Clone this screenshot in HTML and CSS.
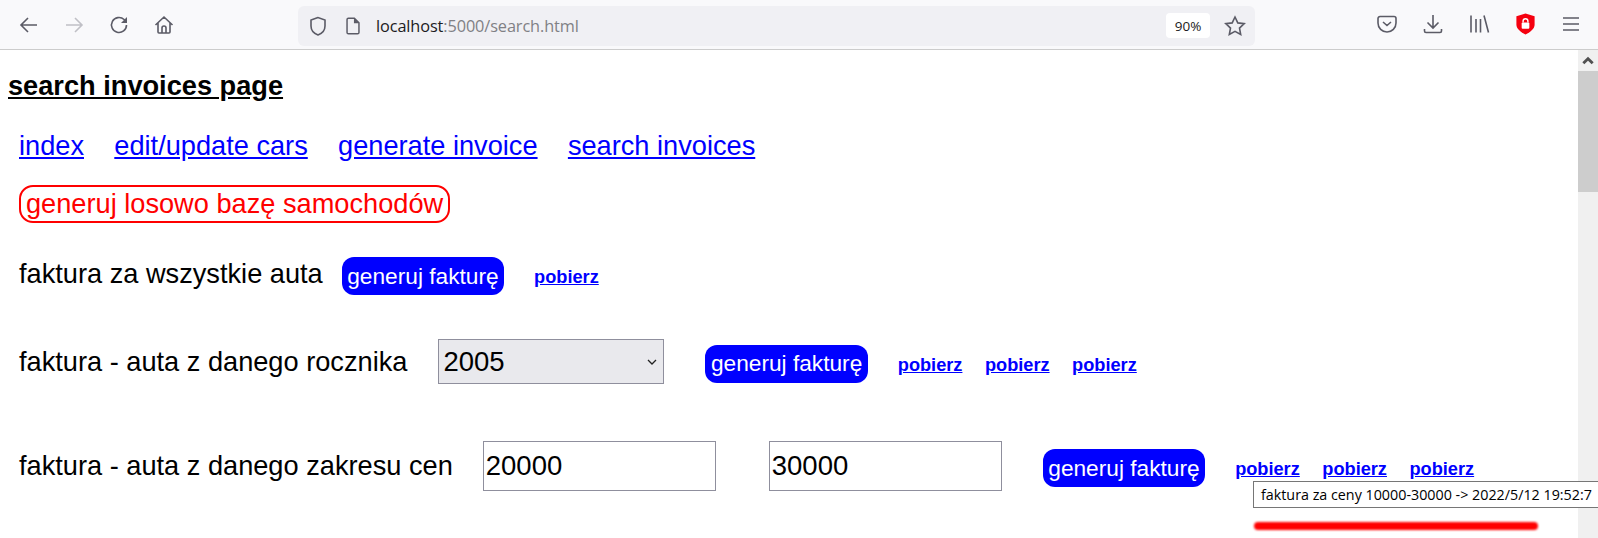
FILE: index.html
```html
<!DOCTYPE html>
<html lang="pl">
<head>
<meta charset="utf-8">
<title>search invoices page</title>
<link rel="stylesheet" href="styles.css">
</head>
<body>
<header class="toolbar">
  <nav class="nav-buttons">
    <svg class="ic" viewBox="0 0 24 24"><path d="M20 12H4.500M11 5l-7 7 7 7"/></svg>
    <svg class="ic dim" viewBox="0 0 24 24"><path d="M4 12h15.500M13 5l7 7-7 7"/></svg>
    <svg class="ic" viewBox="0 0 24 24"><path d="M19.500 12a7.500 7.500 0 1 1-2.400-5.500L19.500 9"/><path class="fill" d="M20 4v6h-6z"/></svg>
    <svg class="ic" viewBox="0 0 24 24"><path d="M3.500 12 12 4l8.500 8M6 10v9a1 1 0 0 0 1 1h10a1 1 0 0 0 1-1v-9M10 20v-5a2 2 0 0 1 4 0v5"/></svg>
  </nav>
  <div class="urlbar">
    <svg class="ic" viewBox="0 0 24 24"><path d="M12 3.500 5 6v6c0 4.500 3 7.500 7 9 4-1.500 7-4.500 7-9V6z"/></svg>
    <svg class="ic page" viewBox="0 0 24 24"><path d="M7 3.500h6.500l5 5V19a1.500 1.500 0 0 1-1.500 1.500H7A1.500 1.500 0 0 1 5.500 19V5A1.500 1.500 0 0 1 7 3.500z"/><path class="fill" d="M13 3.500 18.500 9H13z"/></svg>
    <span class="url">localhost<span class="url-rest">:5000/search.html</span></span>
    <span class="zoom-badge">90%</span>
    <svg class="ic star" viewBox="0 0 24 24"><path d="m12 3 2.800 5.900 6.400.8-4.700 4.400 1.200 6.400L12 17.400l-5.700 3.100 1.200-6.400-4.700-4.400 6.400-.8z"/></svg>
  </div>
  <div class="tools">
    <svg class="ic" viewBox="0 0 24 24"><path d="M5 4.500h14A2 2 0 0 1 21 6.500V11a9 9 0 0 1-18 0V6.500a2 2 0 0 1 2-2zM8 10l4 3.500 4-3.500"/></svg>
    <svg class="ic" viewBox="0 0 24 24"><path d="M12 3v13M6.500 10.500 12 16l5.500-5.500M3.500 17v2a1.500 1.500 0 0 0 1.500 1.500h14a1.500 1.500 0 0 0 1.500-1.500v-2"/></svg>
    <svg class="ic" viewBox="0 0 24 24"><path d="M4 3.500v17M9 7v13.500M13.500 7v13.500M17 3.500l4.500 17"/></svg>
    <svg class="shield" viewBox="0 0 24 24"><path class="red" d="M12 1.500 21.500 4.500v8.500c0 4.500-4 7.500-9.500 10.500C6.500 20.500 2.500 17.500 2.500 13V4.500z"/><rect class="lock" x="8" y="11" width="8" height="6.500" rx="1"/><path class="shackle" d="M9.500 11V9.500a2.500 2.500 0 0 1 5 0V11"/></svg>
    <svg class="ic" viewBox="0 0 24 24"><path d="M4 6h16M4 12h16M4 18h16"/></svg>
  </div>
</header>
<div class="viewport">
  <main class="content">
    <h1 class="title">search invoices page</h1>
    <nav class="links">
      <a href="#">index</a>
      <a href="#">edit/update cars</a>
      <a href="#">generate invoice</a>
      <a href="#">search invoices</a>
    </nav>
    <div class="random-row"><button class="random">generuj losowo bazę samochodów</button></div>
    <section class="row row-all">
      <span class="label">faktura za wszystkie auta</span>
      <button class="generate">generuj fakturę</button>
      <a class="dl first" href="#">pobierz</a>
    </section>
    <section class="row row-year">
      <span class="label">faktura - auta z danego rocznika</span>
      <select class="year"><option>2005</option></select>
      <button class="generate">generuj fakturę</button>
      <span class="dls"><a class="dl" href="#">pobierz</a><a class="dl" href="#">pobierz</a><a class="dl" href="#">pobierz</a></span>
    </section>
    <section class="row row-price">
      <span class="label">faktura - auta z danego zakresu cen</span>
      <input class="price" type="text" value="20000">
      <input class="price" type="text" value="30000">
      <button class="generate">generuj fakturę</button>
      <span class="dls"><a class="dl" href="#">pobierz</a><a class="dl" href="#">pobierz</a><a class="dl" href="#">pobierz</a></span>
    </section>
    <div class="tooltip">faktura za ceny 10000-30000 -&gt; 2022/5/12 19:52:7</div>
    <div class="red-bar"></div>
  </main>
  <aside class="scrollbar">
    <div class="sb-up"><svg viewBox="0 0 12 12"><path d="M2 8l4-4 4 4"/></svg></div>
    <div class="sb-thumb"></div>
  </aside>
</div>
</body>
</html>
```
FILE: styles.css
```css
* { box-sizing: border-box; }
html, body { margin: 0; height: 538px; overflow: hidden; background: #fff; }
body { font-family: "Liberation Sans", Arial, sans-serif; color: #000; }

.toolbar { height: 50px; background: #f9f9fb; border-bottom: 1px solid #ccc; display: flex; align-items: center; }
.ic { width: 24px; height: 24px; fill: none; stroke: #5b5b66; stroke-width: 1.6; flex: none; }
.ic .fill { fill: #5b5b66; stroke: none; }
.ic.dim { stroke: #c0c0c6; }
.nav-buttons { display: flex; gap: 21px; padding-left: 17px; width: 298px; margin-top: 1px; }
.urlbar { width: 957px; height: 40px; margin-top: 2px; background: #f0f0f4; border-radius: 6px; display: flex; align-items: center; padding-left: 8px; }
.urlbar .page { margin-left: 12px; width: 22px; height: 22px; }
.url { font: 16.300px "Open Sans", sans-serif; color: #1c1b22; margin-left: 12px; flex: 1; letter-spacing: -0.1px; }
.url-rest { color: #808085; }
.zoom-badge { background: #fff; border-radius: 4px; width: 44px; height: 25px; display: flex; align-items: center; justify-content: center; font: 13.500px "Open Sans", sans-serif; color: #1c1b22; }
.star { margin: 0 8px 0 13px; }
.tools { display: flex; gap: 22px; align-items: center; margin-left: 120px; margin-top: -2px; }
.shield { width: 23px; height: 23px; flex: none; margin: 0 0.500px; }
.red { fill: #f5000f; }
.lock { fill: #fff; }
.shackle { fill: none; stroke: #fff; stroke-width: 1.5; }

.viewport { display: flex; height: 488px; }
.content { flex: 1; position: relative; padding-left: 8px; min-width: 0; }
.scrollbar { width: 20px; background: #f0f0f0; flex: none; }
.sb-up { height: 21px; display: flex; align-items: center; justify-content: center; }
.sb-up svg { width: 14px; height: 14px; fill: none; stroke: #505050; stroke-width: 2.4; }
.sb-thumb { height: 121px; background: #cdcdcd; }

.title { font-size: 27.200px; font-weight: bold; text-decoration: underline; margin: 19px 0 0; line-height: 34px; }
.links { display: flex; gap: 30.300px; padding-left: 11px; margin-top: 28px; font-size: 27.200px; line-height: 30px; }
a { color: #00f; }
.random-row { margin-top: 24px; padding-left: 11px; display: flex; }
.random { font: 27.200px "Liberation Sans", sans-serif; color: #f00; background: #fff; border: 2px solid #f00; border-radius: 14px; height: 38px; padding: 0 5px; }
.row { display: flex; align-items: center; padding-left: 11px; }
.label { font-size: 27.200px; }
.generate { font: 22.700px "Liberation Sans", sans-serif; color: #fff; background: #00f; border: 0; border-radius: 12px; height: 38px; padding: 0 5.500px; }
.dl { font-size: 18.200px; font-weight: bold; }
.dls { display: flex; gap: 22.500px; }
.row-all { margin-top: 34px; }
.row-all .label { margin-top: -4px; }
.row-all .generate { margin-left: 19px; }
.row-all .dl { margin-left: 30px; margin-top: 2px; }
.row-year { margin-top: 44px; }
.year { appearance: none; width: 226px; height: 45px; margin-left: 31px; font: 27.500px "Liberation Sans", sans-serif; background: #e9e9ed url("data:image/svg+xml,%3Csvg xmlns='http://www.w3.org/2000/svg' width='10' height='6'%3E%3Cpath d='M1 1l4 4 4-4' fill='none' stroke='%23222' stroke-width='1.300'/%3E%3C/svg%3E") no-repeat right 6px center; border: 1px solid #8f8f9d; border-radius: 0; padding-left: 4px; color: #000; }
.row-year .generate { margin-left: 41px; margin-top: 4px; }
.row-year .dls { margin-left: 30px; margin-top: 8px; }
.row-price { margin-top: 57px; }
.price { width: 233px; height: 50px; font: 27.500px "Liberation Sans", sans-serif; border: 1px solid #8f8f9d; padding: 0 2px; color: #000; background: #fff; }
.row-price .price:first-of-type { margin-left: 30px; }
.row-price .price + .price { margin-left: 53px; }
.row-price .generate { margin-left: 41px; margin-top: 4px; }
.row-price .dls { margin-left: 30px; margin-top: 6px; }

.tooltip { position: absolute; left: 1253px; top: 431px; height: 27px; width: 345px; background: #fff; border: 1px solid #767676; border-right: 0; font: 14.300px "Open Sans", "Liberation Sans", sans-serif; padding: 0 0 0 7px; line-height: 26px; white-space: nowrap; }
.red-bar { position: absolute; left: 1254px; top: 472px; width: 284px; height: 8px; background: #f00; border-radius: 4px; filter: blur(1px); }
```
